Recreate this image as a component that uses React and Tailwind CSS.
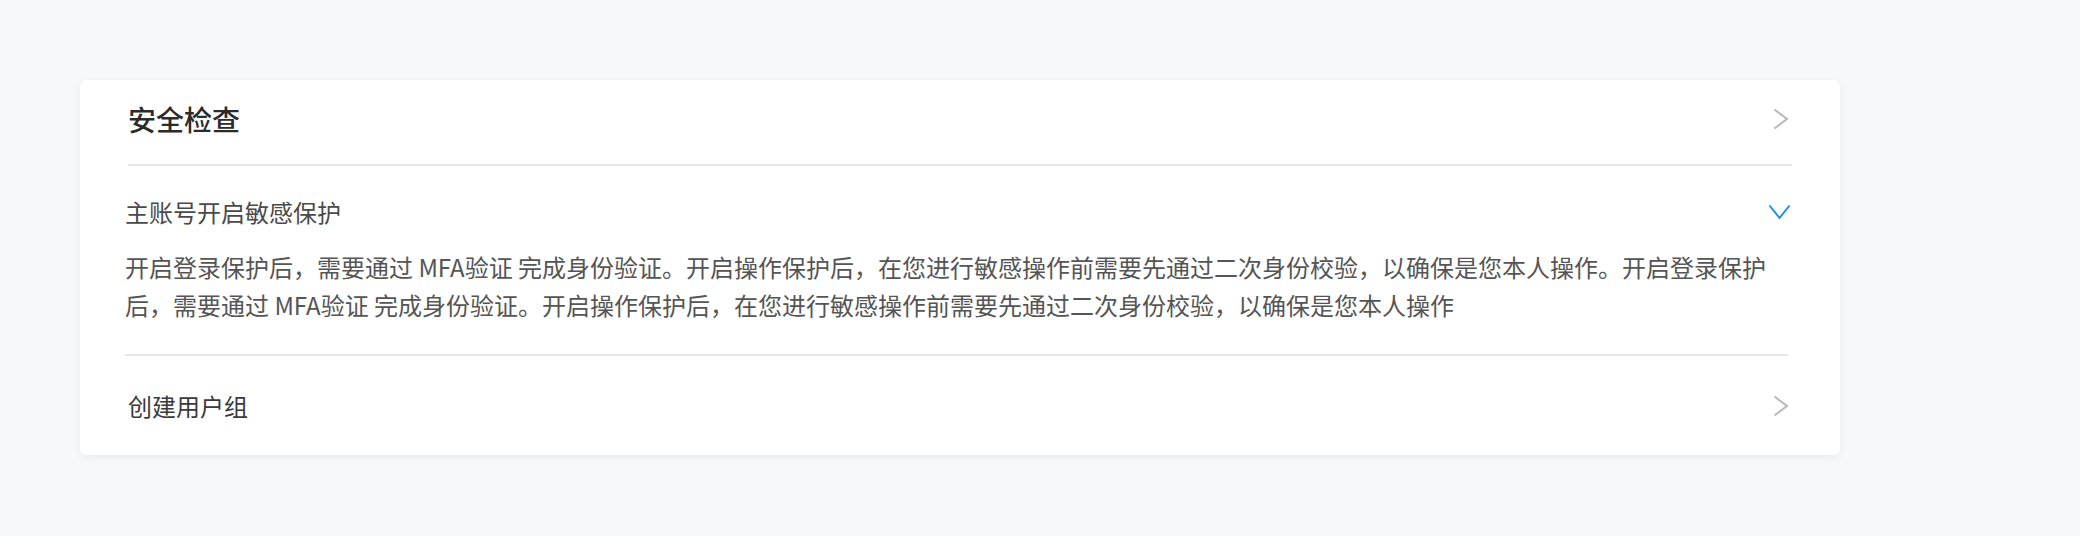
import React from 'react';

const ChevronRight = () => (
  <svg width="16" height="22" viewBox="0 0 16 22" fill="none">
    <path d="M1.5 1.5 L14 11 L1.5 20.5" stroke="#b8b8b8" strokeWidth="2" />
  </svg>
);

const ChevronDown = () => (
  <svg width="23" height="16" viewBox="0 0 23 16" fill="none">
    <path d="M1.5 1.5 L11.5 14 L21.5 1.5" stroke="#1890e8" strokeWidth="2" />
  </svg>
);

const desc =
  '开启登录保护后，需要通过 MFA验证 完成身份验证。开启操作保护后，在您进行敏感操作前需要先通过二次身份校验，以确保是您本人操作。开启登录保护后，需要通过 MFA验证 完成身份验证。开启操作保护后，在您进行敏感操作前需要先通过二次身份校验，以确保是您本人操作';

const App = () => {
  return (
    <div
      className="w-[2080px] h-[536px] bg-[#f7f8fa] pt-[80px] pl-[80px]"
      style={{ fontFamily: '"Noto Sans CJK SC", "Noto Sans", sans-serif' }}
    >
      <div className="w-[1760px] bg-white rounded-[6px] shadow-[0_2px_10px_rgba(0,0,0,0.06)]">
        {/* Header */}
        <div className="mx-12 h-[86px] pb-[6px] flex items-center justify-between border-b-2 border-[#e6e6e6]">
          <h2 className="text-[28px] font-medium text-[#2b2b2b] leading-none">安全检查</h2>
          <div className="mr-[3px]">
            <ChevronRight />
          </div>
        </div>

        {/* Expanded item */}
        <div className="ml-[45px] mr-[52px] pt-[29px] pb-[30px] border-b-2 border-[#e6e6e6]">
          <div className="h-[34px] flex items-center justify-between">
            <span className="text-[24px] text-[#4a4a4a] leading-none">主账号开启敏感保护</span>
            <div className="-mr-[3px]">
              <ChevronDown />
            </div>
          </div>
          <p className="mt-[19px] text-[24px] leading-[38px] text-[#555555]">{desc}</p>
        </div>

        {/* Collapsed item */}
        <div className="mx-12 h-[99px] flex items-center justify-between">
          <span className="text-[24px] text-[#3a3a3a] leading-none">创建用户组</span>
          <div className="mr-[3px]">
            <ChevronRight />
          </div>
        </div>
      </div>
    </div>
  );
};

export default App;
